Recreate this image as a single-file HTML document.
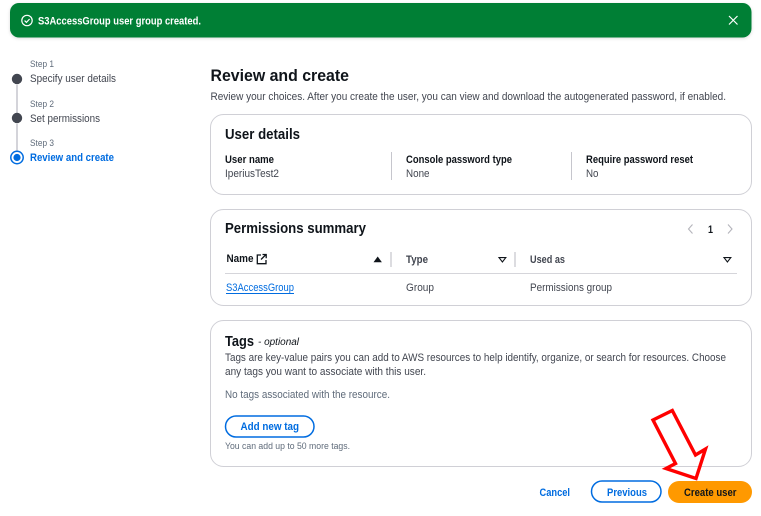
<!DOCTYPE html>
<html><head><meta charset="utf-8"><title>Review and create</title>
<style>
html,body{margin:0;padding:0;background:#fff;width:761px;height:516px;overflow:hidden}
svg{display:block;filter:blur(.3px)}
text{font-family:"Liberation Sans",sans-serif;font-size:11px;fill:#424650;white-space:pre}
.b{font-weight:700;fill:#0f141a}
.s{font-size:9.5px;fill:#5f6b7a}
.h{font-weight:700;font-size:14.5px;fill:#0f141a}
.l{font-weight:700;fill:#006ce0}
.card{fill:#fff;stroke:#d0d0d6;stroke-width:1}
.div{stroke:#c6c6cd;stroke-width:1}
</style></head><body>
<svg width="761" height="516" viewBox="0 0 761 516" xmlns="http://www.w3.org/2000/svg">
<defs><filter id="sh" x="-5%" y="-30%" width="110%" height="170%"><feDropShadow dx="0" dy="1" stdDeviation="1.5" flood-color="#000" flood-opacity=".14"/></filter></defs>
<rect width="761" height="516" fill="#fff"/>

<!-- banner -->
<rect x="10" y="3" width="741.5" height="34.5" rx="9" fill="#037f36" filter="url(#sh)"/>
<circle cx="27" cy="20.5" r="5.2" fill="none" stroke="#fff" stroke-width="1.2"/>
<path d="M24.6 20.6l1.8 1.8 3.2-3.4" fill="none" stroke="#fff" stroke-width="1.2"/>
<text x="38" y="24.5" textLength="163" lengthAdjust="spacingAndGlyphs" style="font-weight:700;fill:#fff">S3AccessGroup user group created.</text>
<path d="M729 16l8.5 8.5M737.5 16l-8.5 8.5" stroke="#fff" stroke-width="1.2" fill="none"/>

<!-- steps -->
<line x1="17" y1="85" x2="17" y2="113" stroke="#c6c6cd" stroke-width="1.5"/>
<line x1="17" y1="124" x2="17" y2="151" stroke="#c6c6cd" stroke-width="1.5"/>
<circle cx="17" cy="79" r="5.2" fill="#424650"/>
<circle cx="17" cy="118" r="5.2" fill="#424650"/>
<circle cx="17" cy="157.5" r="6.2" fill="#fff" stroke="#006ce0" stroke-width="1.5"/>
<circle cx="17" cy="157.5" r="3.6" fill="#006ce0"/>
<text class="s" x="30" y="67" textLength="24" lengthAdjust="spacingAndGlyphs">Step 1</text>
<text x="30" y="82" textLength="86" lengthAdjust="spacingAndGlyphs">Specify user details</text>
<text class="s" x="30" y="107" textLength="24" lengthAdjust="spacingAndGlyphs">Step 2</text>
<text x="30" y="122" textLength="70" lengthAdjust="spacingAndGlyphs">Set permissions</text>
<text class="s" x="30" y="146" textLength="24" lengthAdjust="spacingAndGlyphs">Step 3</text>
<text class="l" x="30" y="161" textLength="84" lengthAdjust="spacingAndGlyphs">Review and create</text>

<!-- heading -->
<text x="210.5" y="81" textLength="138.5" lengthAdjust="spacingAndGlyphs" style="font-weight:700;font-size:17px;fill:#0f141a">Review and create</text>
<text x="210.5" y="100" textLength="515.5" lengthAdjust="spacingAndGlyphs">Review your choices. After you create the user, you can view and download the autogenerated password, if enabled.</text>

<!-- card 1 -->
<rect class="card" x="210.5" y="114.5" width="541" height="80" rx="13"/>
<text class="h" x="225" y="139" textLength="75" lengthAdjust="spacingAndGlyphs">User details</text>
<text class="b" x="225" y="163" textLength="49" lengthAdjust="spacingAndGlyphs">User name</text>
<text x="225" y="177" textLength="54" lengthAdjust="spacingAndGlyphs">IperiusTest2</text>
<line class="div" x1="391.5" y1="152" x2="391.5" y2="180"/>
<text class="b" x="406" y="163" textLength="106" lengthAdjust="spacingAndGlyphs">Console password type</text>
<text x="406" y="177" textLength="23.5" lengthAdjust="spacingAndGlyphs">None</text>
<line class="div" x1="571.5" y1="152" x2="571.5" y2="180"/>
<text class="b" x="586" y="163" textLength="107" lengthAdjust="spacingAndGlyphs">Require password reset</text>
<text x="586" y="177" textLength="12.5" lengthAdjust="spacingAndGlyphs">No</text>

<!-- card 2 -->
<rect class="card" x="210.5" y="209.5" width="541" height="96" rx="13"/>
<text class="h" x="225" y="233" textLength="141" lengthAdjust="spacingAndGlyphs">Permissions summary</text>
<path d="M692.5 224.5l-4 4.5 4 4.5" fill="none" stroke="#b4b4bb" stroke-width="1.1"/>
<text class="b" x="708" y="233" textLength="5" lengthAdjust="spacingAndGlyphs">1</text>
<path d="M728 224.5l4 4.5-4 4.5" fill="none" stroke="#b4b4bb" stroke-width="1.1"/>

<text class="b" x="226.5" y="262" textLength="27" lengthAdjust="spacingAndGlyphs">Name</text>
<path d="M261 255h-3.7v8.7h8.7V260M261 259.5l5-5M262.5 254.5h3.7v3.7" fill="none" stroke="#0f141a" stroke-width="1.3"/>
<path d="M373.5 262.3l4.2-5.8 4.2 5.8z" fill="#0f141a"/>
<line x1="391" y1="252" x2="391" y2="267" stroke="#d0d0d6" stroke-width="1.5"/>
<text x="406" y="263" textLength="22" lengthAdjust="spacingAndGlyphs" style="font-weight:700;fill:#424650">Type</text>
<path d="M499 257.6h6.8l-3.4 4.4z" fill="none" stroke="#0f141a" stroke-width="1.1"/>
<line x1="515" y1="252" x2="515" y2="267" stroke="#d0d0d6" stroke-width="1.5"/>
<text x="530" y="263" textLength="35" lengthAdjust="spacingAndGlyphs" style="font-weight:700;fill:#424650">Used as</text>
<path d="M724 257.6h6.8l-3.4 4.4z" fill="none" stroke="#0f141a" stroke-width="1.1"/>
<line x1="225" y1="273.5" x2="737" y2="273.5" stroke="#d5d5da" stroke-width="1"/>

<text x="226" y="291" textLength="68" lengthAdjust="spacingAndGlyphs" style="fill:#006ce0">S3AccessGroup</text>
<line x1="226" y1="293.5" x2="294" y2="293.5" stroke="#006ce0" stroke-width="1"/>
<text x="406" y="291" textLength="28" lengthAdjust="spacingAndGlyphs">Group</text>
<text x="530" y="291" textLength="82" lengthAdjust="spacingAndGlyphs">Permissions group</text>

<!-- card 3 -->
<rect class="card" x="210.5" y="320.5" width="541" height="146" rx="13"/>
<text class="h" x="225" y="346" textLength="29" lengthAdjust="spacingAndGlyphs">Tags</text>
<text x="258" y="345" textLength="41" lengthAdjust="spacingAndGlyphs" style="font-style:italic;font-size:10px;fill:#0f141a">- optional</text>
<text x="225" y="361" textLength="501" lengthAdjust="spacingAndGlyphs">Tags are key-value pairs you can add to AWS resources to help identify, organize, or search for resources. Choose</text>
<text x="225" y="375" textLength="201" lengthAdjust="spacingAndGlyphs">any tags you want to associate with this user.</text>
<text x="225" y="398" textLength="165" lengthAdjust="spacingAndGlyphs" style="fill:#5f6b7a">No tags associated with the resource.</text>
<rect x="225.5" y="416" width="88.5" height="21" rx="10.5" fill="#fff" stroke="#006ce0" stroke-width="1.5"/>
<text class="l" x="240.5" y="430" textLength="58.5" lengthAdjust="spacingAndGlyphs">Add new tag</text>
<text class="s" x="225" y="449" textLength="125" lengthAdjust="spacingAndGlyphs">You can add up to 50 more tags.</text>

<!-- footer -->
<text class="l" x="539.5" y="496" textLength="30.5" lengthAdjust="spacingAndGlyphs">Cancel</text>
<rect x="591.5" y="481" width="69.5" height="21" rx="10.5" fill="#fff" stroke="#006ce0" stroke-width="1.5"/>
<text class="l" x="607" y="496" textLength="40" lengthAdjust="spacingAndGlyphs">Previous</text>
<rect x="668" y="481" width="84" height="22" rx="11" fill="#ff9900"/>
<text class="b" x="684" y="496" textLength="52.5" lengthAdjust="spacingAndGlyphs">Create user</text>

<!-- arrow -->
<path d="M653 420L672.3 410.5L695.5 455L705.5 449L696 478.5L666 468.5L675.5 463.5Z" fill="none" stroke="#ff0000" stroke-width="3.4" stroke-linejoin="miter"/>
</svg>
</body></html>
